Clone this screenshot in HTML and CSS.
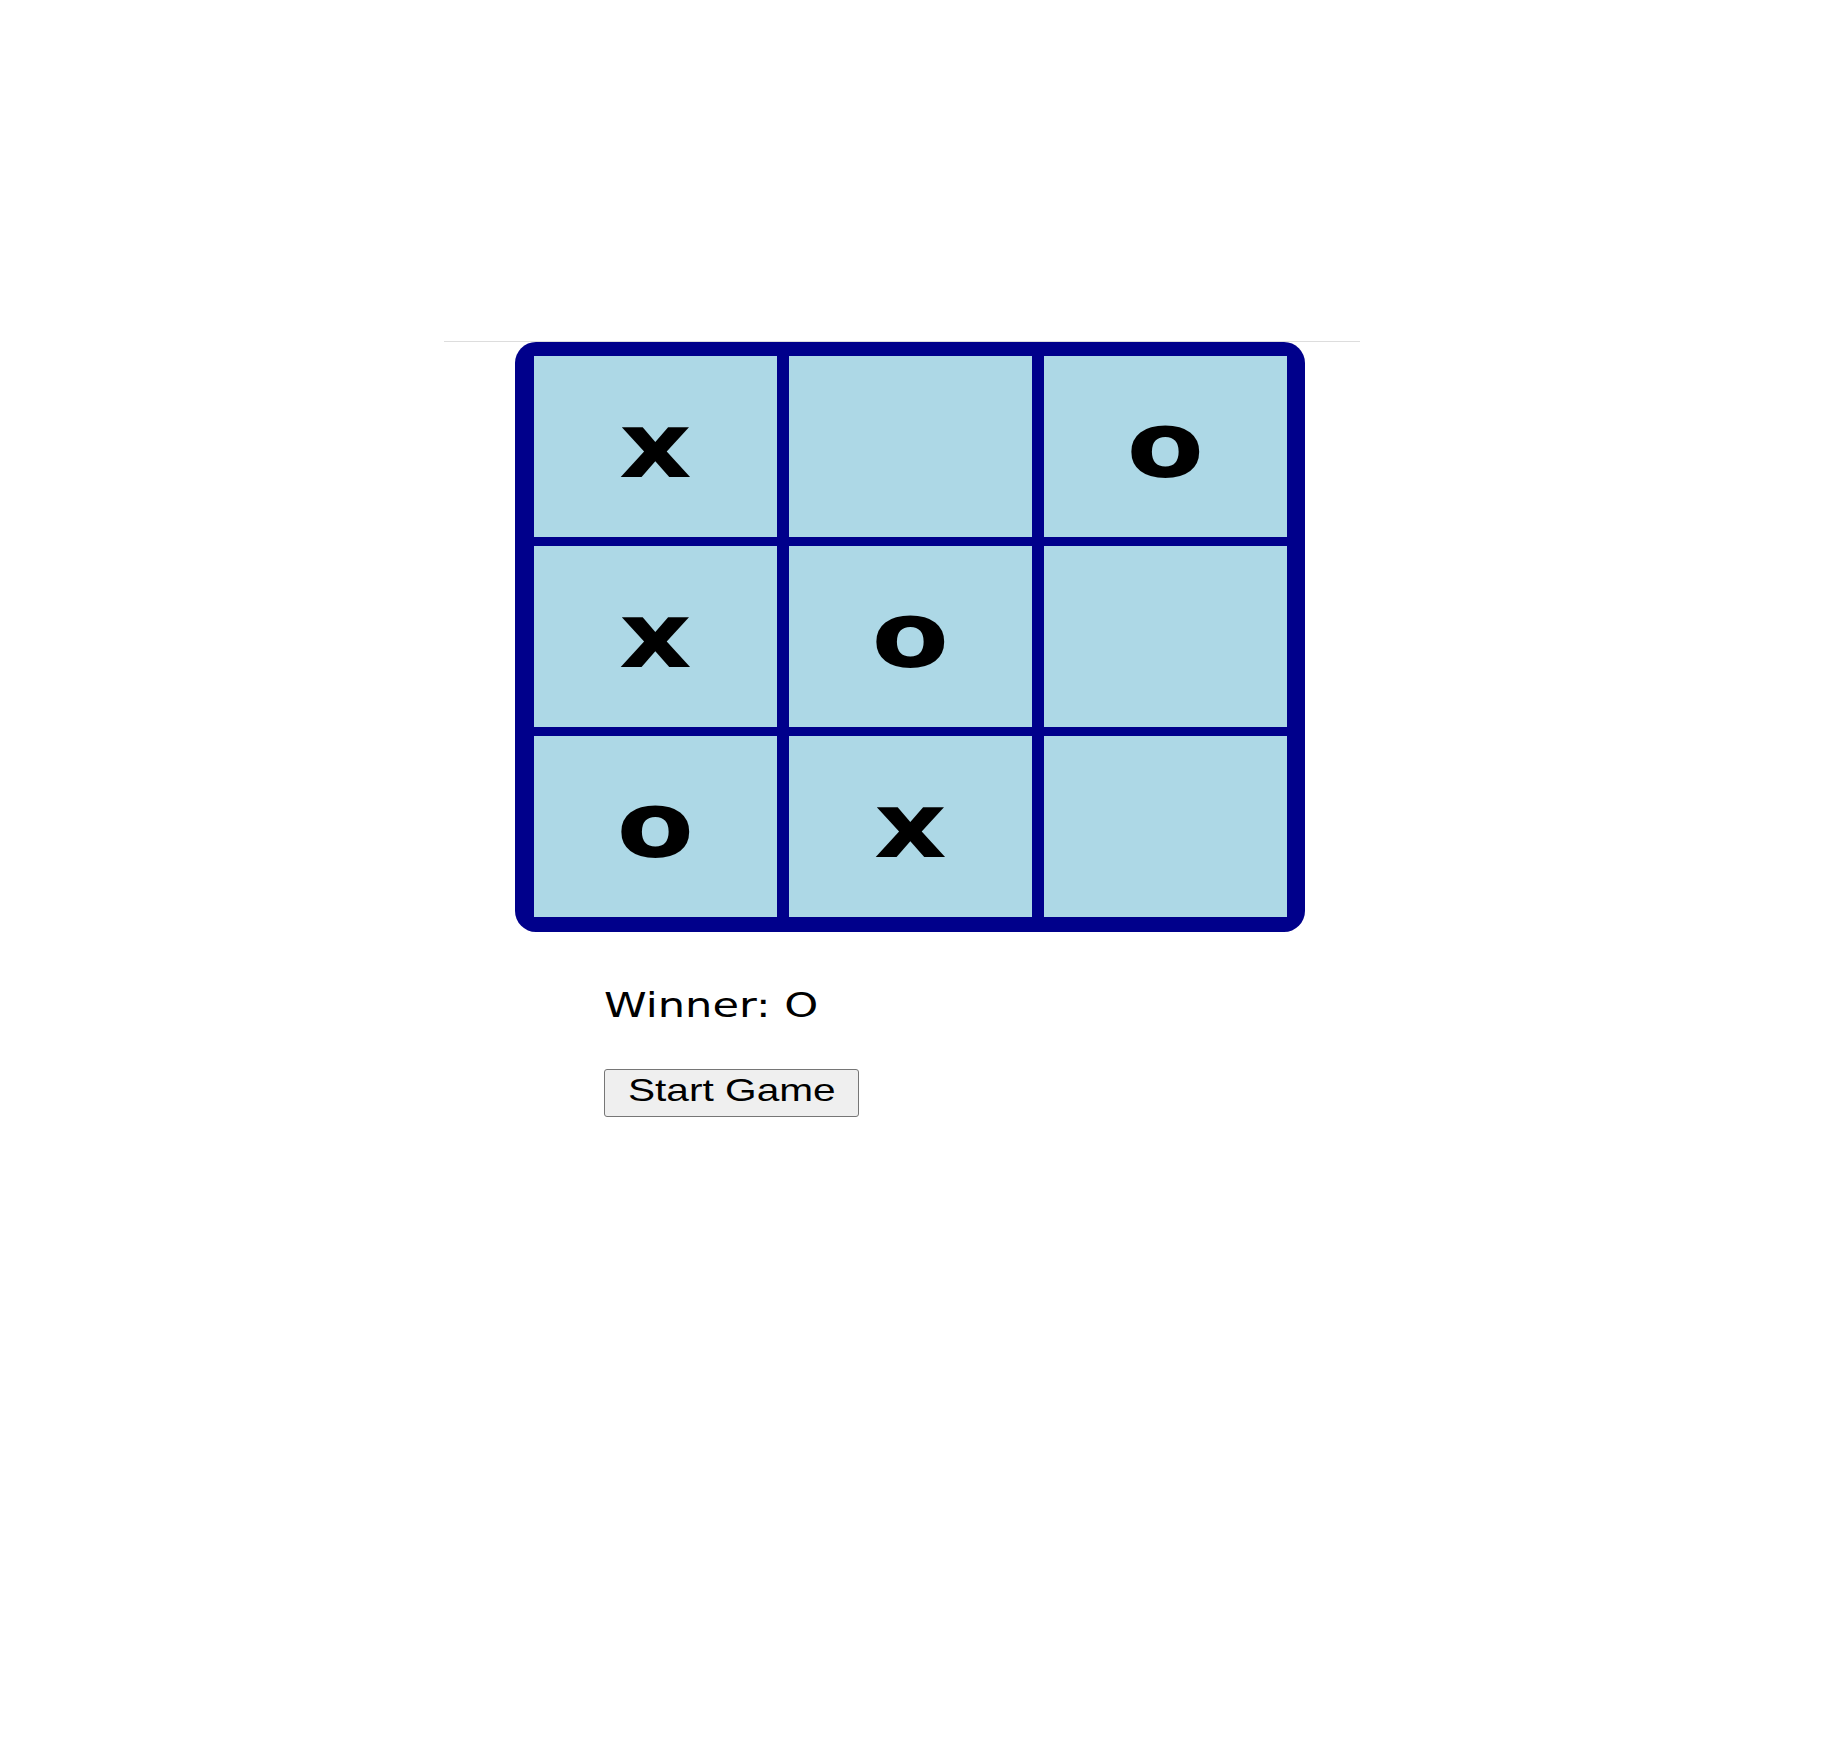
FILE: index.html
```html
<!DOCTYPE html>
<html lang="en">
<head>
<meta charset="utf-8">
<title>Tic Tac Toe</title>
<link rel="stylesheet" href="styles.css">
</head>
<body>
<main class="game">
  <div class="board">
    <div class="cell"><span class="mark">x</span></div>
    <div class="cell"></div>
    <div class="cell"><span class="mark">o</span></div>
    <div class="cell"><span class="mark">x</span></div>
    <div class="cell"><span class="mark">o</span></div>
    <div class="cell"></div>
    <div class="cell"><span class="mark">o</span></div>
    <div class="cell"><span class="mark">x</span></div>
    <div class="cell"></div>
  </div>
  <p class="status"><span class="status-text">Winner: O</span></p>
  <button class="start" type="button"><span class="start-text">Start Game</span></button>
</main>
</body>
</html>
```
FILE: styles.css
```css
html, body {
  margin: 0;
  padding: 0;
  background: #ffffff;
}

.game {
  margin: 341px 0 0 444px;
  width: 916px;
  border-top: 1px solid #dddddd;
  display: flex;
  flex-direction: column;
  align-items: flex-start;
}

.board {
  margin-left: 71px;
  display: grid;
  grid-template-columns: repeat(3, 243px);
  grid-template-rows: repeat(3, 181px);
  column-gap: 12px;
  row-gap: 9px;
  padding: 14px 18px 15px 19px;
  background: #00008b;
  border-radius: 21px;
}

.cell {
  background: #add8e6;
  display: flex;
  align-items: center;
  justify-content: center;
}

.mark {
  font-family: "DejaVu Sans", Verdana, sans-serif;
  font-weight: bold;
  font-size: 91px;
  line-height: 1;
  color: #000000;
  transform: scaleX(1.24);
  margin-top: -3px;
}

.status {
  margin: 53px 0 0 160px;
  font-family: "DejaVu Sans", Verdana, sans-serif;
  font-size: 34px;
  line-height: normal;
  color: #000000;
}

.status-text {
  display: inline-block;
  transform: scaleX(1.27);
  transform-origin: left center;
}

.start {
  margin: 44px 0 0 160px;
  width: 255px;
  height: 48px;
  padding: 0 0 5px 0;
  box-sizing: border-box;
  background: #efefef;
  border: 1px solid #767676;
  border-radius: 3px;
  font-family: "Liberation Sans", Arial, sans-serif;
  font-size: 32px;
  color: #000000;
  display: flex;
  align-items: center;
  justify-content: center;
}

.start-text {
  display: inline-block;
  transform: scaleX(1.27);
}
```
